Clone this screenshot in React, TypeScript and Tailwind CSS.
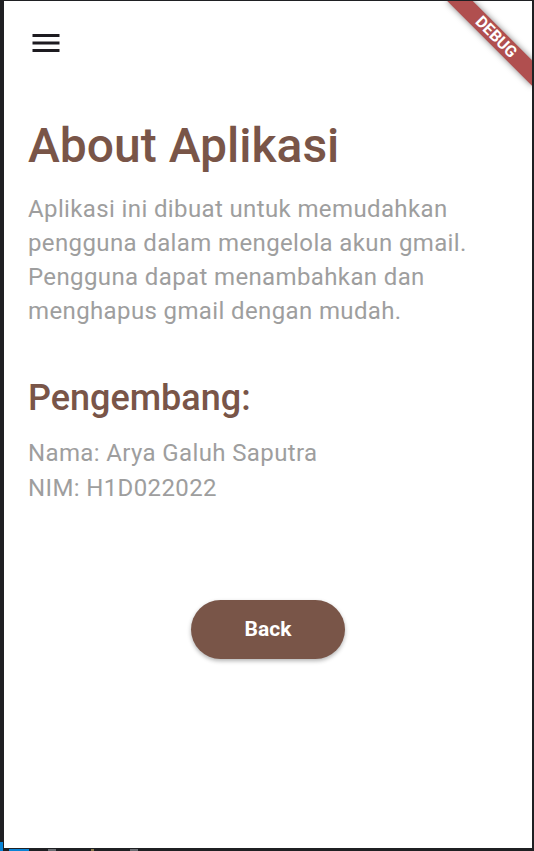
import React from "react";

export default function App() {
  return (
    <div
      className="w-[534px] h-[851px] bg-[#1f2023] relative overflow-hidden flex flex-col pt-[1px] pl-[4px] pr-[2px] pb-[3px]"
      style={{ fontFamily: "Roboto, 'Noto Sans', sans-serif" }}
    >
      {/* bottom taskbar bits */}
      <div className="absolute left-0 bottom-0 w-[3px] h-[9px] bg-[#0a84d6]" />
      <div className="absolute left-[9px] bottom-0 w-[20px] h-[2px] bg-[#0a84d6]" />
      <div className="absolute left-[48px] bottom-0 w-[8px] h-[2px] bg-[#6b6e73]" />
      <div className="absolute left-[91px] bottom-0 w-[3px] h-[2px] bg-[#8a7a4a]" />
      <div className="absolute left-[130px] bottom-0 w-[8px] h-[2px] bg-[#6b6e73]" />

      <div className="flex-1 bg-white relative overflow-hidden flex flex-col">
        {/* App bar */}
        <div className="h-[84px] flex items-center shrink-0">
          <div className="w-[84px] h-[84px] flex items-center justify-center">
            <svg width="36" height="36" viewBox="0 0 24 24">
              <path d="M3 18h18v-2H3v2zm0-5h18v-2H3v2zm0-7v2h18V6H3z" fill="#1d1b20" />
            </svg>
          </div>
        </div>

        {/* Content */}
        <div className="px-[24px] flex flex-col">
          <h1 className="mt-[33px] text-[48px] leading-[56px] text-[#795548] font-medium">
            About Aplikasi
          </h1>
          <p className="mt-[18px] text-[24px] leading-[34px] tracking-[0.375px] text-[#9e9e9e]">
            Aplikasi ini dibuat untuk memudahkan
            <br />
            pengguna dalam mengelola akun gmail.
            <br />
            Pengguna dapat menambahkan dan
            <br />
            menghapus gmail dengan mudah.
          </p>
          <h2 className="mt-[49px] text-[36px] leading-[42px] text-[#795548] font-medium">
            Pengembang:
          </h2>
          <p className="mt-[17px] text-[24px] leading-[35px] tracking-[0.375px] text-[#9e9e9e]">
            Nama: Arya Galuh Saputra
            <br />
            NIM: H1D022022
          </p>
          <div className="mt-[94px] flex justify-center">
            <button className="w-[154px] h-[59px] rounded-full bg-[#795548] text-white text-[21px] font-bold shadow-[0_2px_4px_rgba(0,0,0,0.3)]">
              Back
            </button>
          </div>
        </div>

        {/* Debug banner */}
        <div
          className="absolute w-[120px] h-[18px] bg-[#b04f4f] flex items-center justify-center shadow-[0_0_6px_rgba(0,0,0,0.5)]"
          style={{ right: -24, top: 27, transform: "rotate(45deg)" }}
        >
          <span className="text-white text-[16px] font-bold leading-none tracking-normal">DEBUG</span>
        </div>
      </div>
    </div>
  );
}
